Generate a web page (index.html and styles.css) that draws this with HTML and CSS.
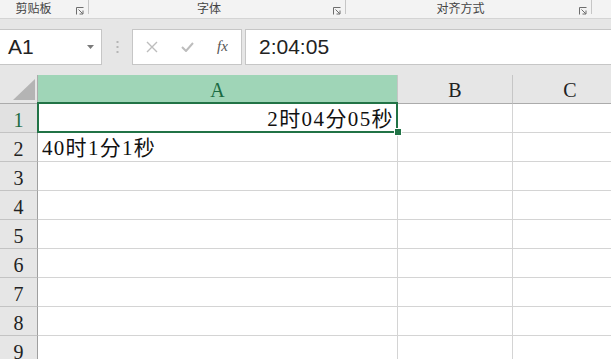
FILE: index.html
```html
<!DOCTYPE html>
<html lang="zh-CN">
<head>
<meta charset="utf-8">
<title>Excel</title>
<link rel="stylesheet" href="styles.css">
</head>
<body>
<div class="ribbon">
  <div class="group g1"><span class="label">剪贴板</span><svg class="launch" width="8" height="8" viewBox="0 0 8 8"><path d="M0.5 7.5V0.5H7.5" fill="none" stroke="#6d6d6d"/><path d="M2.5 2.5L6.8 6.8M7 3.5V7H3.5" fill="none" stroke="#6d6d6d"/></svg></div>
  <div class="sep"></div>
  <div class="group g2"><span class="label">字体</span><svg class="launch" width="8" height="8" viewBox="0 0 8 8"><path d="M0.5 7.5V0.5H7.5" fill="none" stroke="#6d6d6d"/><path d="M2.5 2.5L6.8 6.8M7 3.5V7H3.5" fill="none" stroke="#6d6d6d"/></svg></div>
  <div class="sep"></div>
  <div class="group g3"><span class="label">对齐方式</span><svg class="launch" width="8" height="8" viewBox="0 0 8 8"><path d="M0.5 7.5V0.5H7.5" fill="none" stroke="#6d6d6d"/><path d="M2.5 2.5L6.8 6.8M7 3.5V7H3.5" fill="none" stroke="#6d6d6d"/></svg></div>
  <div class="sep"></div>
</div>

<div class="fbar">
  <div class="namebox"><span class="ref">A1</span><svg class="caret" width="7" height="4" viewBox="0 0 7 4"><path d="M0 0H7L3.5 4Z" fill="#7a7a7a"/></svg></div>
  <div class="grip"><svg width="3" height="12" viewBox="0 0 3 12"><rect x="0.5" y="0" width="2" height="2" fill="#b5b5b5"/><rect x="0.5" y="5" width="2" height="2" fill="#b5b5b5"/><rect x="0.5" y="10" width="2" height="2" fill="#b5b5b5"/></svg></div>
  <div class="fbtns">
    <svg class="btn" width="12" height="12" viewBox="0 0 12 12"><path d="M1 1L11 11M11 1L1 11" stroke="#bdbdbd" stroke-width="1.4" fill="none"/></svg>
    <svg class="btn" width="13" height="10" viewBox="0 0 13 10"><path d="M1 5L5 9L12 1" stroke="#bdbdbd" stroke-width="2" fill="none"/></svg>
    <span class="fx">fx</span>
  </div>
  <div class="finput">2:04:05</div>
</div>

<div class="sheet">
  <div class="corner"><svg width="22" height="21" viewBox="0 0 22 21"><path d="M22 0V21H0Z" fill="#b4b4b4"/></svg></div>
  <div class="ch sel-col">A</div>
  <div class="ch">B</div>
  <div class="ch">C</div>

  <div class="rh sel-row">1</div>
  <div class="c a1 right">2时04分05秒<div class="selbox"><div class="handle"></div></div></div>
  <div class="c"></div>
  <div class="c"></div>

  <div class="rh">2</div>
  <div class="c">40时1分1秒</div>
  <div class="c"></div>
  <div class="c"></div>

  <div class="rh">3</div><div class="c"></div><div class="c"></div><div class="c"></div>
  <div class="rh">4</div><div class="c"></div><div class="c"></div><div class="c"></div>
  <div class="rh">5</div><div class="c"></div><div class="c"></div><div class="c"></div>
  <div class="rh">6</div><div class="c"></div><div class="c"></div><div class="c"></div>
  <div class="rh">7</div><div class="c"></div><div class="c"></div><div class="c"></div>
  <div class="rh">8</div><div class="c"></div><div class="c"></div><div class="c"></div>
  <div class="rh">9</div><div class="c"></div><div class="c"></div><div class="c"></div>
</div>
</body>
</html>
```

FILE: styles.css
```css
* { box-sizing: border-box; }
html, body {
  margin: 0;
  padding: 0;
}
body {
  width: 611px;
  height: 359px;
  overflow: hidden;
  background: #e6e6e6;
  font-family: "Liberation Sans", "Noto Sans CJK SC", sans-serif;
}

/* Ribbon group labels */
.ribbon {
  display: flex;
  height: 19px;
  margin-left: -5px;
  background: #f3f3f3;
  border-bottom: 1px solid #d4d4d4;
}
.group {
  display: flex;
  align-items: center;
  height: 18px;
}
.g1 { width: 93px; }
.g2 { width: 256px; }
.g3 { width: 245px; }
.label {
  flex: 1;
  text-align: center;
  font-family: "Noto Sans CJK SC", sans-serif;
  font-size: 12px;
  line-height: 14px;
  color: #444;
  margin-top: -3px;
}
.launch {
  flex: none;
  margin: 3px 4px 0 4px;
}
.sep {
  width: 1px;
  height: 14px;
  background: #c6c6c6;
  flex: none;
}

/* Formula bar */
.fbar {
  display: flex;
  align-items: stretch;
  height: 56px;
  padding: 10px 0;
}
.namebox {
  width: 103px;
  margin-left: -1px;
  background: #fff;
  border: 1px solid #c6c6c6;
  display: flex;
  align-items: center;
  padding-left: 8px;
  padding-right: 7px;
}
.ref {
  flex: 1;
  font-size: 21px;
  color: #222;
}
.caret { flex: none; }
.grip {
  width: 30px;
  display: flex;
  align-items: center;
  justify-content: center;
}
.fbtns {
  width: 110px;
  background: #fff;
  border: 1px solid #c6c6c6;
  display: flex;
  align-items: center;
  padding-left: 13px;
}
.btn { flex: none; }
.fbtns .btn:nth-child(1) { margin-right: 23px; }
.fbtns .btn:nth-child(2) { margin-right: 23px; }
.fx {
  font-family: "Liberation Serif", serif;
  font-style: italic;
  font-size: 15px;
  color: #555;
  margin-top: -2px;
}
.finput {
  flex: 1;
  margin-left: 3px;
  margin-right: -2px;
  background: #fff;
  border: 1px solid #c6c6c6;
  font-size: 21px;
  color: #222;
  display: flex;
  align-items: center;
  padding-left: 13px;
}

/* Sheet grid */
.sheet {
  display: grid;
  grid-template-columns: 38px 360px 115px 115px;
  grid-auto-rows: 29px;
  background: #fff;
  font-family: "Liberation Serif", "Noto Sans CJK SC", serif;
}
.corner {
  background: #e6e6e6;
  border-right: 1px solid #ababab;
  border-bottom: 1px solid #ababab;
  padding: 4px 0 0 13px;
}
.corner svg { display: block; }
.ch {
  background: #e6e6e6;
  border-right: 1px solid #c6c6c6;
  border-bottom: 1px solid #ababab;
  text-align: center;
  font-size: 20px;
  line-height: 24px;
  padding-top: 3px;
  color: #222;
}
.ch.sel-col {
  background: #9fd5b7;
  color: #1b6b43;
}
.rh {
  background: #e6e6e6;
  border-right: 1px solid #9f9f9f;
  border-bottom: 1px solid #c3c3c3;
  text-align: center;
  font-size: 20px;
  line-height: 24px;
  padding-top: 4px;
  color: #222;
}
.rh.sel-row {
  background: #e1e1e1;
  color: #1b6b43;
}
.c {
  position: relative;
  border-right: 1px solid #d4d4d4;
  border-bottom: 1px solid #d4d4d4;
  font-size: 21px;
  letter-spacing: 1.3px;
  line-height: 25px;
  padding: 3px 4px 0 4px;
  color: #111;
  white-space: nowrap;
}
.c.right {
  text-align: right;
  padding-right: 3px;
  letter-spacing: 1.4px;
}
.selbox {
  position: absolute;
  left: -1px;
  top: -2px;
  width: 361px;
  height: 31px;
  border: 2px solid #217346;
  z-index: 2;
}
.handle {
  position: absolute;
  right: -5px;
  bottom: -4px;
  width: 6px;
  height: 6px;
  background: #217346;
  outline: 1px solid #fff;
}
```
